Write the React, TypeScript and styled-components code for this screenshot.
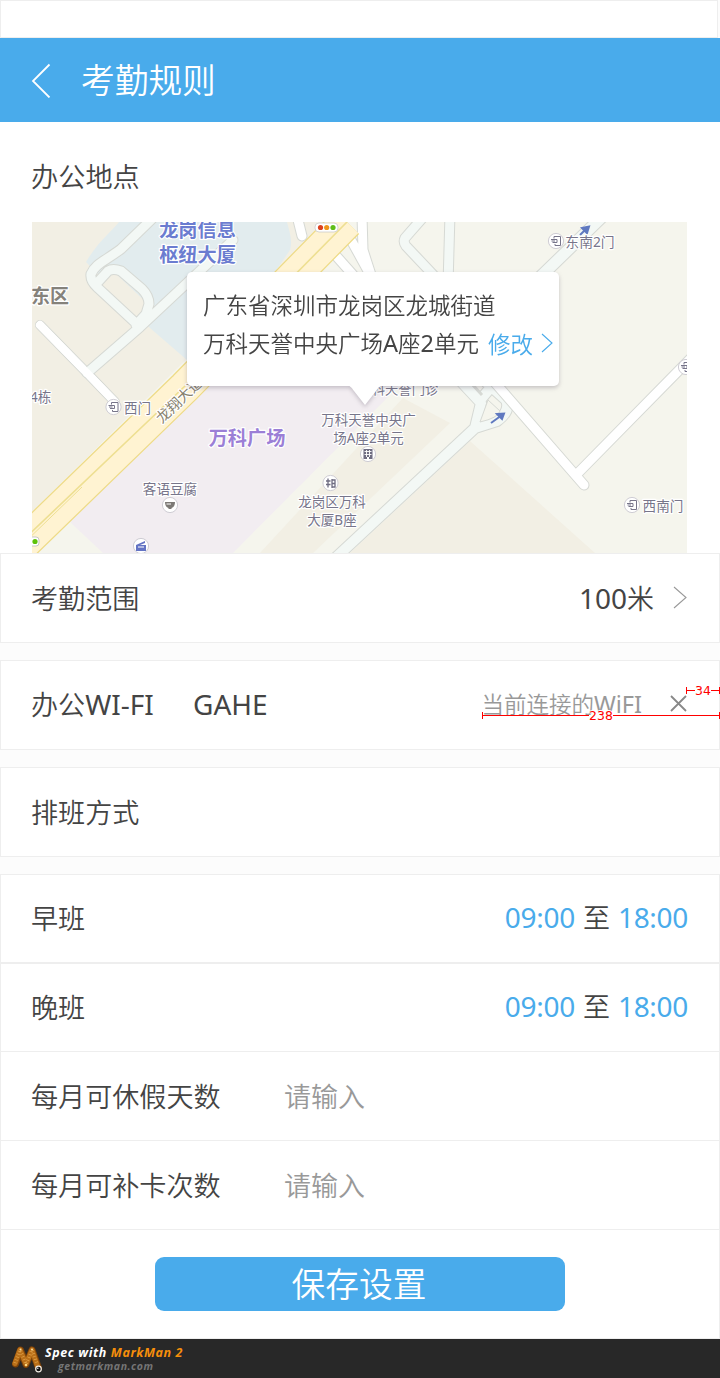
import React from "react";
import styled, { createGlobalStyle, css } from "styled-components";

const BLUE = "#49abeb";
const LINE = "#eeeeee";
const INK = "#444444";

const GlobalStyle = createGlobalStyle`
  * { box-sizing: border-box; }
  body {
    margin: 0;
    background: #fcfcfc;
    color: ${INK};
    font-family: "Noto Sans", "Noto Sans CJK SC", sans-serif;
    font-weight: 400;
  }
`;

const Page = styled.div`
  display: flex;
  flex-direction: column;
  width: 720px;
  height: 1378px;
  overflow: hidden;
`;

const StatusBar = styled.div`
  width: 718px;
  height: 38px;
  background: #fff;
  border: 1px solid ${LINE};
`;

const Header = styled.header`
  display: flex;
  align-items: center;
  gap: 30px;
  height: 84px;
  padding: 0 31px;
  background: ${BLUE};
  color: #fff;
`;

const cjk = css`
  font-family: "Noto Sans CJK SC", sans-serif;
  font-weight: 350;
  white-space: nowrap;
`;

const Title = styled.h1`
  ${cjk}
  margin: 0;
  font-size: 33.7px;
  line-height: 84px;
  padding-bottom: 2px;
`;

const Location = styled.section`
  height: 431px;
  padding: 0 32px 0 31px;
  background: #fff;
`;

const SectionTitle = styled.h2`
  ${cjk}
  margin: 0;
  height: 100px;
  padding-top: 3px;
  font-size: 27.2px;
  line-height: 100px;
`;

const MapBox = styled.div`
  position: relative;
  width: 655px;
  height: 331px;
  margin-left: 1px;
`;

const MapSvg = styled.svg`
  display: block;
  font-family: "Noto Sans", "Noto Sans CJK SC", sans-serif;
`;

const Callout = styled.div`
  position: absolute;
  left: 155px;
  top: 50px;
  width: 372px;
  height: 114px;
  padding: 13px 6px 0 16px;
  border-radius: 5px;
  background: #fff;
  filter: drop-shadow(0 2px 2px rgba(90, 80, 100, 0.3));
`;

const Pointer = styled.svg`
  position: absolute;
  left: 158px;
  top: 113px;
`;

const AddressLine = styled.div`
  ${cjk}
  display: flex;
  align-items: center;
  height: 38.5px;
  font-size: 22.5px;
  line-height: 38px;
`;

const Edit = styled.span`
  display: flex;
  align-items: center;
  gap: 8px;
  margin-left: auto;
  color: ${BLUE};
`;

const Latin = styled.span<{ $size?: number }>`
  font-family: "Noto Sans", sans-serif;
  font-weight: 400;
  font-size: ${(p) => p.$size ?? 28}px;
`;

const Row = styled.div<{ $h?: number; $top?: boolean; $gap?: number; $lift?: number }>`
  position: relative;
  display: flex;
  align-items: center;
  flex: none;
  height: ${(p) => p.$h ?? 89}px;
  margin-bottom: ${(p) => p.$gap ?? 0}px;
  padding: 0 32px ${(p) => p.$lift ?? 0}px 30px;
  background: #fff;
  border: 1px solid ${LINE};
  border-top-width: ${(p) => (p.$top ? 1 : 0)}px;
`;

const Label = styled.span<{ $w?: number; $drop?: number }>`
  ${cjk}
  width: ${(p) => (p.$w ? `${p.$w}px` : "auto")};
  padding-top: ${(p) => p.$drop ?? 0}px;
  font-size: 27.1px;
  line-height: 40px;
`;

const Value = styled.span`
  ${cjk}
  display: flex;
  align-items: baseline;
  margin-left: auto;
  font-size: 27px;
  line-height: 40px;
`;

const Time = styled(Latin)`
  color: ${BLUE};
  letter-spacing: -0.3px;
`;

const Shift = styled(Value)`
  margin-right: -1px;
`;

const To = styled.span`
  margin: 0 8px;
`;

const Hint = styled.span<{ $size?: number }>`
  ${cjk}
  color: #999;
  font-size: ${(p) => p.$size ?? 27}px;
  line-height: 40px;
`;

const Icon = styled.svg<{ $ml?: number }>`
  flex: none;
  margin-left: ${(p) => p.$ml ?? 0}px;
`;

const Measure = styled.div<{ $w: number; $top: number }>`
  position: absolute;
  right: -1px;
  top: ${(p) => p.$top}px;
  width: ${(p) => p.$w}px;
  height: 7px;
  display: flex;
  align-items: center;
  border: solid #f00;
  border-width: 0 1px;
  color: #f00;
  font: 12.5px/12px "DejaVu Sans", sans-serif;
  text-shadow: 0 0 1px #fff, 1px 0 #fff, -1px 0 #fff, 0 1px #fff, 0 -1px #fff;

  &::before,
  &::after {
    content: "";
    flex: 1;
    height: 1px;
    background: #f00;
  }
`;

const Actions = styled.div`
  flex: none;
  display: flex;
  justify-content: center;
  align-items: flex-start;
  height: 109px;
  padding-top: 27px;
  background: #fff;
  border: 1px solid ${LINE};
  border-top: 0;
`;

const SaveButton = styled.button`
  ${cjk}
  width: 410px;
  height: 54px;
  padding: 0 2px 2px 0;
  border: 0;
  border-radius: 9px;
  background: ${BLUE};
  color: #fff;
  font-size: 33.7px;
  line-height: 52px;
`;

const Footer = styled.footer`
  display: flex;
  flex: none;
  height: 39px;
  padding: 6px 0 0 11px;
  background: #282828;
`;

const Credits = styled.div`
  display: flex;
  flex-direction: column;
  margin-left: 2px;
  padding-top: 2px;
  font: italic 700 12.5px/12px "Open Sans", sans-serif;
  white-space: nowrap;
`;

const Brand = styled.div`
  color: #fff;
  letter-spacing: 0.6px;
  span { color: #f78f0b; }
`;

const Site = styled.div`
  margin: 1px 0 0 13px;
  color: #757575;
  font-size: 10.5px;
  line-height: 12px;
  letter-spacing: 0.55px;
`;

type RoadProps = { d: string; w?: number; fill?: string; edge?: string };

const Road = ({ d, w = 11, fill = "#f3f8f5", edge = "#d6d9d4" }: RoadProps) => (
  <g fill="none" strokeLinejoin="round" strokeLinecap="round">
    <path d={d} stroke={edge} strokeWidth={w + 2} />
    <path d={d} stroke={fill} strokeWidth={w} />
  </g>
);

type LabelProps = {
  x: number;
  y: number;
  size?: number;
  color?: string;
  bold?: boolean;
  anchor?: "start" | "middle";
  rotate?: number;
  children: string;
};

const MapLabel = ({ x, y, size = 13.5, color = "#77758a", bold, anchor = "middle", rotate, children }: LabelProps) => (
  <text
    x={x}
    y={y}
    fontSize={size}
    fill={color}
    fontWeight={bold ? 700 : 400}
    textAnchor={anchor}
    stroke="#fff"
    strokeWidth={2.4}
    strokeLinejoin="round"
    paintOrder="stroke"
    transform={rotate ? `rotate(${rotate} ${x} ${y})` : undefined}
  >
    {children}
  </text>
);

const Spot = ({ x, y, children }: { x: number; y: number; children: React.ReactNode }) => (
  <g transform={`translate(${x} ${y})`}>
    <circle r="7.6" fill="#fff" stroke="#cfcdd4" strokeWidth="1" />
    {children}
  </g>
);

const Gate = ({ x, y }: { x: number; y: number }) => (
  <Spot x={x} y={y}>
    <path d="M-2 -2.500V-4.500H4.500V4.500H-1V3M-5 -1.500H1V1.500H-3.500M-4.500 0H-1" fill="none" stroke="#77758a" strokeWidth="1" />
  </Spot>
);

const CityMap = () => (
  <MapSvg width="655" height="331" viewBox="32 222 655 331">
    <rect x="32" y="222" width="655" height="331" fill="#f5f5ed" />
    <path d="M32 222H325L32 512Z" fill="#f2efe4" />
    <path d="M119 222 C107 236 98 242 86 262 L150 328 187 360 275 272 290 250 C293 240 289 230 287 222Z" fill="#e2ecee" />
    <path d="M100 282L112 270 149 305 138 326Z" fill="#f2efe4" />
    <path d="M70 522L210 380H370L400 385 233 553H103Z" fill="#f2edf1" />
    <path d="M403 398L450 423 313 553H260Z" fill="#f2efe4" />
    <path d="M470 441L595 553H350Z" fill="#f2efe4" />
    <Road w={8} fill="#fff" d="M40 325L87 373 115 402" />
    <Road
      w={9}
      d="M157 214L121 249C105 261 95 264 91 274Q90 281 98 288L140 327M97 283L108 271Q113 268 121 271L142 289Q149 296 149 304L146 314 136 325M233 240L140 327 87 373"
    />
    <path d="M40 325L87 373 115 402" fill="none" stroke="#fff" strokeWidth="8" strokeLinecap="round" />
    <Road w={9} fill="#fff" d="M297 216L302 236M322 240L362 285M340 220L372 278M362 216L363 250 372 278" />
    <path d="M20 547L185 387 347 222" fill="none" stroke="#eedb87" strokeWidth="34" />
    <path d="M20 547L185 387 347 222" fill="none" stroke="#fff3d2" strokeWidth="31.500" />
    <path d="M20 543L185 386 347 222" fill="none" stroke="#eedf92" strokeWidth="1.600" />
    <path d="M20 547L82 487" fill="none" stroke="#eedf92" strokeWidth="1" />
    <Road d="M426 214L405 238Q403 242 406 246L440 282" w={9} />
    <Road d="M450 214L448 285" w={9} />
    <Road d="M603 216L535 282" w={11} />
    <Road w={10} d="M330 563L475 428 497 421Q511 411 506 400L486 382M455 375L481 403 475 428M481 399L492 386" />
    <path d="M472 384L482 395" stroke="#d6d9d4" strokeWidth="3" />
    <path d="M488 400L500 411Q498 418 480 422Z" fill="#f5f5ed" stroke="#d6d9d4" strokeWidth="1" />
    <Road w={9} fill="#fff" d="M490 377L584 485M577 474L695 354" />
    <path d="M491 423L502 415M497 414L504 413.500 502 419Z" stroke="#6079c0" strokeWidth="2" fill="#6079c0" />
    <path d="M580 235L587 228M582 228L589 226.500 587 233Z" stroke="#6079c0" strokeWidth="2" fill="#6079c0" />

    <rect x="315" y="223" width="23" height="9" rx="4" fill="#fff" stroke="#ccc" strokeWidth=".8" />
    <circle cx="320.500" cy="227.500" r="2.600" fill="#dc431f" />
    <circle cx="326.700" cy="227.500" r="2.600" fill="#ee951b" />
    <circle cx="333" cy="227.500" r="2.600" fill="#60bd18" />
    <rect x="27" y="537" width="12" height="9" rx="3" fill="#fff" stroke="#bbb" strokeWidth=".8" />
    <circle cx="35" cy="541.500" r="2.600" fill="#5ec20a" />

    <MapLabel x={197.5} y={236.5} size={19.2} color="#6b7cd0" bold>龙岗信息</MapLabel>
    <MapLabel x={197.5} y={262} size={19.2} color="#6b7cd0" bold>枢纽大厦</MapLabel>
    <MapLabel x={31} y={303} size={19} color="#85827b" bold anchor="start">东区</MapLabel>
    <MapLabel x={30} y={402} anchor="start">4栋</MapLabel>
    <MapLabel x={137.5} y={413}>西门</MapLabel>
    <MapLabel x={162} y={424} size={14.5} color="#86806c" anchor="start" rotate={-44}>龙翔大道</MapLabel>
    <MapLabel x={247} y={444.5} size={19.2} color="#9b7fd6" bold>万科广场</MapLabel>
    <MapLabel x={170} y={493.5} size={13.6}>客语豆腐</MapLabel>
    <MapLabel x={332} y={507}>龙岗区万科</MapLabel>
    <MapLabel x={332} y={525}>大厦B座</MapLabel>
    <MapLabel x={368.5} y={425}>万科天誉中央广</MapLabel>
    <MapLabel x={368.5} y={443}>场A座2单元</MapLabel>
    <MapLabel x={405} y={394} size={13.3}>科天誉门诊</MapLabel>
    <MapLabel x={590} y={246.5} size={13.8}>东南2门</MapLabel>
    <MapLabel x={663} y={511} size={13.6}>西南门</MapLabel>

    <Gate x={556} y={241} />
    <Gate x={113.5} y={407} />
    <Gate x={632} y={505} />
    <Gate x={686} y={367} />
    <Spot x={170} y={505}>
      <path d="M-5 -3H5Q5 2 1.500 3V4H-1.500V3Q-5 2 -5 -3Z" fill="#7c7975" />
      <path d="M-3.500 -1H1" stroke="#fff" />
    </Spot>
    <Spot x={141} y={546}>
      <path d="M-5 -1L4 -5V-3L-1 -1H5V5H-5Z" fill="#6474c4" />
      <path d="M-3 1H3" stroke="#fff" />
    </Spot>
    <Spot x={368} y={454}>
      <path d="M-4.500 -5H4.500V5H1V3H-1V5H-4.500Z" fill="#6f6d82" />
      <path d="M-3.500 -2.500H3.500M-3.500 .5H3.500M-1.500 -4V3M1.500 -4V3" stroke="#fff" strokeWidth=".9" />
    </Spot>
    <Spot x={330.5} y={483}>
      <path d="M-4.500 -2H0M-4.500 1.500H0M-2.500 -4.500V4.500M1.500 -4V5M1 -3H4.500V4H1M1 .5H4" fill="none" stroke="#6f6d82" strokeWidth="1.300" />
    </Spot>
  </MapSvg>
);

const Chevron = ({ color, w, h, ml }: { color: string; w: number; h: number; ml?: number }) => (
  <Icon $ml={ml} width={w} height={h} viewBox={`0 0 ${w} ${h}`}>
    <path d={`M1 1L${w - 1} ${h / 2}L1 ${h - 1}`} fill="none" stroke={color} strokeWidth={1.1} />
  </Icon>
);

const MarkManLogo = () => (
  <svg width="32" height="30" viewBox="0 0 32 30">
    <g fill="none" strokeLinecap="round" strokeLinejoin="round">
      <path d="M4.500 19L9.500 5L15 19.500L21 5L27.500 23" stroke="#7d4208" strokeWidth="7" />
      <path d="M4 18.500L9 5L15 19L21 5L27 22.500" stroke="#b96f18" strokeWidth="5.200" />
      <path d="M4 18L9 5L15 19L21 5L26 19" stroke="#e0a24a" strokeWidth="3.400" strokeDasharray=".7 2.300" strokeLinecap="butt" />
    </g>
    <circle cx="9.500" cy="4.500" r="1" fill="#fbe2a4" />
    <circle cx="21" cy="4.500" r="1" fill="#fbe2a4" />
    <circle cx="15" cy="20" r="1.200" fill="#ffda83" />
    <circle cx="27.500" cy="24" r="3.400" fill="#f4efe8" />
    <circle cx="27.500" cy="24" r="2.200" fill="#111" />
    <circle cx="26.800" cy="23.300" r=".7" fill="#fff" />
  </svg>
);

const ShiftRow = ({ name }: { name: string }) => (
  <Row $top $lift={3}>
    <Label $drop={2}>{name}</Label>
    <Shift>
      <Time>09:00</Time>
      <To>至</To>
      <Time>18:00</Time>
    </Shift>
  </Row>
);

const InputRow = ({ name }: { name: string }) => (
  <Row>
    <Label $w={253}>{name}</Label>
    <Hint>请输入</Hint>
  </Row>
);

export default function App() {
  return (
    <Page>
      <GlobalStyle />
      <StatusBar />
      <Header>
        <Icon width="20" height="36" viewBox="0 0 20 36">
          <path d="M18.500 2.500L2 19L18.500 35.500" fill="none" stroke="#fff" strokeWidth="1.800" />
        </Icon>
        <Title>考勤规则</Title>
      </Header>
      <Location>
        <SectionTitle>办公地点</SectionTitle>
        <MapBox>
          <CityMap />
          <Callout>
            <AddressLine>广东省深圳市龙岗区龙城街道</AddressLine>
            <AddressLine>
              <span>
                万科天誉中央广场<Latin $size={23.5}>A</Latin>座<Latin $size={23.5}>2</Latin>单元
              </span>
              <Edit>
                修改
                <Chevron color={BLUE} w={12} h={20} />
              </Edit>
            </AddressLine>
            <Pointer width="40" height="22" viewBox="0 0 40 22">
              <path d="M0 0H40C35 0 33 3 31 6L20 20L9 6C7 3 5 0 0 0Z" fill="#fff" />
            </Pointer>
          </Callout>
        </MapBox>
      </Location>

      <Row $top $h={90} $gap={17} $lift={1}>
        <Label>考勤范围</Label>
        <Value>
          <Latin>100</Latin>米
        </Value>
        <Chevron color="#999" w={14} h={23} ml={19} />
      </Row>

      <Row $top $h={90} $gap={17} $lift={3}>
        <Label $w={162}>
          办公<Latin>WI-FI</Latin>
        </Label>
        <Latin>GAHE</Latin>
        <Value>
          <Hint $size={22.5}>
            当前连接的<Latin $size={23.5}>WiFI</Latin>
          </Hint>
        </Value>
        <Icon $ml={28} width="17" height="17" viewBox="0 0 17 17">
          <path d="M1 1L16 16M16 1L1 16" stroke="#888" strokeWidth="1.800" />
        </Icon>
        <Measure $w={34} $top={26}>34</Measure>
        <Measure $w={238} $top={51}>238</Measure>
      </Row>

      <Row $top $h={90} $gap={17}>
        <Label>排班方式</Label>
      </Row>

      <ShiftRow name="早班" />
      <ShiftRow name="晚班" />
      <InputRow name="每月可休假天数" />
      <InputRow name="每月可补卡次数" />

      <Actions>
        <SaveButton>保存设置</SaveButton>
      </Actions>
      <Footer>
        <MarkManLogo />
        <Credits>
          <Brand>
            Spec with <span>MarkMan 2</span>
          </Brand>
          <Site>getmarkman.com</Site>
        </Credits>
      </Footer>
    </Page>
  );
}
